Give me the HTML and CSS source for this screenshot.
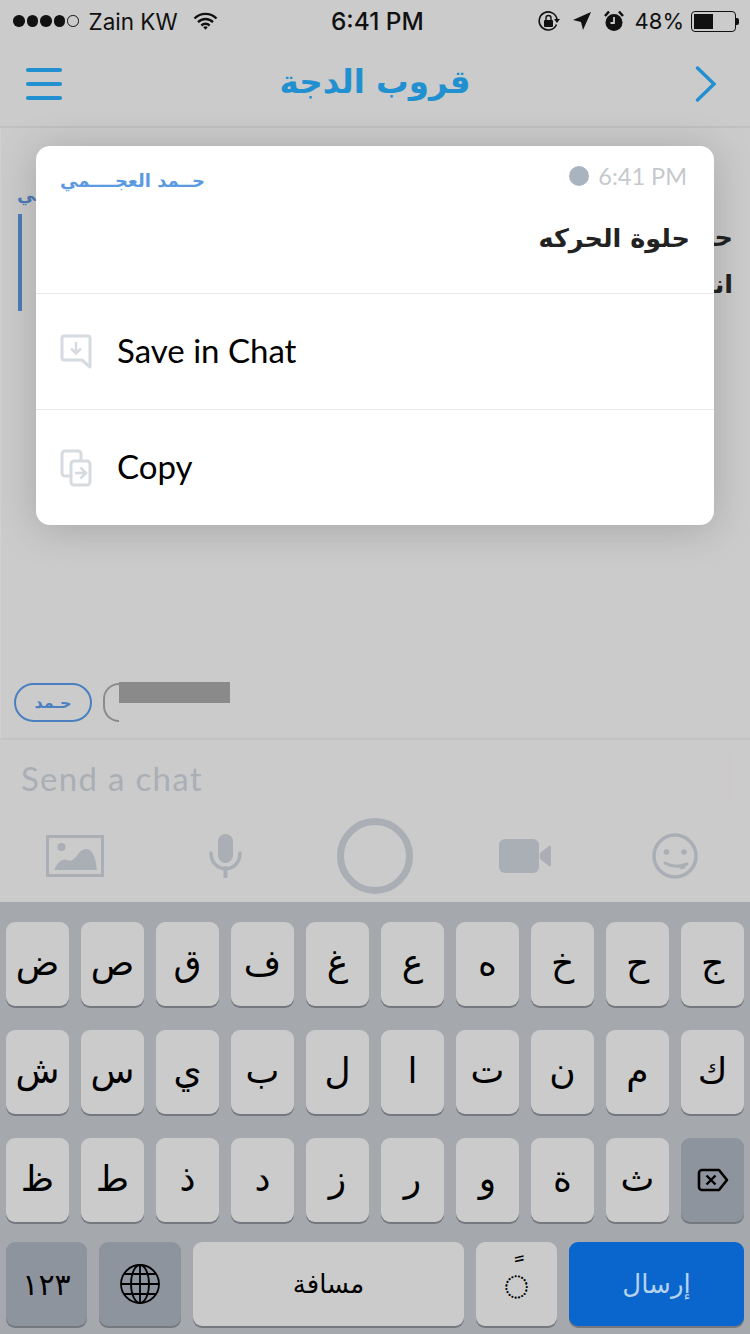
FILE: index.html
```html
<!doctype html>
<html lang="ar">
  <head>
    <meta charset="UTF-8" />
    <meta name="viewport" content="width=device-width, initial-scale=1" />
    <title>Chat</title>
    <link rel="stylesheet" href="styles.css">
  </head>
  <body>
    <div class="c-screen">
      <div class="c-status">
        <div class="c-status__left">
          <div class="c-signal"><i></i><i></i><i></i><i></i><i class="c-signal__off"></i></div>
          <span class="c-status__carrier" dir="ltr">Zain KW</span>
          <svg class="c-status__wifi" viewBox="0 0 25 18" width="25" height="18">
            <path d="M1.5 6.5a15.5 15.5 0 0 1 22 0M5 10.2a10.5 10.5 0 0 1 15 0M8.4 13.6a5.6 5.6 0 0 1 8.2 0" fill="none" stroke="#111" stroke-width="2.4"/>
            <path d="M10.3 15.2a3.2 3.2 0 0 1 4.4 0l-2.2 2.6z" fill="#111"/>
          </svg>
        </div>
        <span class="c-status__time" dir="ltr">6:41 PM</span>
        <div class="c-status__right">
          <svg viewBox="0 0 23 23" width="23" height="23">
            <path d="M19.5 14.5a9 9 0 1 1 .6-5" fill="none" stroke="#111" stroke-width="1.6"/>
            <path d="M17 9h6l-3 4z" fill="#111"/>
            <rect x="7" y="10" width="9" height="7" rx="1" fill="#111"/>
            <path d="M9 10V8a2.5 2.5 0 0 1 5 0v2" fill="none" stroke="#111" stroke-width="1.4"/>
          </svg>
          <svg class="c-status__arrow" viewBox="0 0 18 18" width="18" height="18"><path d="M18 0 0 8l8 2 2 8z" fill="#111"/></svg>
          <svg class="c-status__alarm" viewBox="0 0 20 22" width="20" height="22">
            <circle cx="10" cy="12.5" r="8.5" fill="#111"/>
            <path d="M10 7v6h-3.500" fill="none" stroke="#ccc" stroke-width="1.800"/>
            <path d="M1 6 5 1.500M19 6l-4-4.500" stroke="#111" stroke-width="2.500"/>
          </svg>
          <span class="c-status__battery-text" dir="ltr">48%</span>
          <div class="c-battery"><div class="c-battery__fill"></div></div>
          <div class="c-battery__cap"></div>
        </div>
      </div>

      <div class="c-nav">
        <div class="c-nav__menu"><i></i><i></i><i></i></div>
        <div class="c-nav__title">قروب الدجة</div>
        <svg class="c-nav__back" viewBox="0 0 22 36" width="22" height="36"><path d="M2.500 2 19 18 2.500 34" fill="none" stroke="#2190d0" stroke-width="3.400" stroke-linecap="round"/></svg>
      </div>

      <div class="c-chat">
        <div class="c-message">
          <div class="c-message__name">حـمد العجــمي</div>
          <div class="c-message__body">
            <p>حلوة الحركه</p>
            <p>انا</p>
          </div>
        </div>
        <div class="c-chips">
          <div class="c-chip">حـمد</div>
          <div class="c-chip-cut"></div>
          <div class="c-redact"></div>
        </div>
      </div>

      <div class="c-input">
        <span class="c-input__placeholder" dir="ltr">Send a chat</span>
        <div class="c-input__caret"></div>
      </div>

      <div class="c-tools">
        <svg viewBox="0 0 58 42" width="58" height="42">
          <rect x="1.500" y="1.500" width="55" height="39" fill="none" stroke="#a9afb5" stroke-width="3"/>
          <circle cx="15.500" cy="12" r="4" fill="#a9afb5"/>
          <path d="M8 35c4-8 8-12 13-10 4 2 7 0 12-7 5-6 11-5 14 1 3 5 3 11 4 16z" fill="#a9afb5"/>
        </svg>
        <svg viewBox="0 0 33 44" width="33" height="44">
          <rect x="9" y="0" width="15" height="29" rx="7.500" fill="#a9afb5"/>
          <path d="M2 19c0 21 29 21 29 0" fill="none" stroke="#a9afb5" stroke-width="3.500" stroke-linecap="round"/>
          <path d="M16.500 34v9" stroke="#a9afb5" stroke-width="4" stroke-linecap="round"/>
        </svg>
        <div class="c-shutter"></div>
        <svg viewBox="0 0 52 34" width="52" height="34">
          <rect x="0" y="0" width="40" height="34" rx="6" fill="#a9afb5"/>
          <path d="M41 14 50 7q2-1 2 1v18q0 2-2 1l-9-7z" fill="#a9afb5"/>
        </svg>
        <svg viewBox="0 0 46 46" width="46" height="46">
          <circle cx="23" cy="23" r="21" fill="none" stroke="#a9afb5" stroke-width="3.500"/>
          <circle cx="14.500" cy="19" r="2.800" fill="#a9afb5"/>
          <circle cx="32" cy="19" r="2.800" fill="#a9afb5"/>
          <path d="M13 30c7 4 15 4 22 1" fill="none" stroke="#a9afb5" stroke-width="3" stroke-linecap="round"/>
          <path d="M26 32.500l7-2 .5 4q-3 3-5.500 1z" fill="#a9afb5"/>
        </svg>
      </div>

      <div class="c-keyboard">
        <div class="c-keys">
          <div class="c-key">ض</div><div class="c-key">ص</div><div class="c-key">ق</div><div class="c-key">ف</div><div class="c-key">غ</div>
          <div class="c-key">ع</div><div class="c-key">ه</div><div class="c-key">خ</div><div class="c-key">ح</div><div class="c-key">ج</div>
        </div>
        <div class="c-keys">
          <div class="c-key">ش</div><div class="c-key">س</div><div class="c-key">ي</div><div class="c-key">ب</div><div class="c-key">ل</div>
          <div class="c-key">ا</div><div class="c-key">ت</div><div class="c-key">ن</div><div class="c-key">م</div><div class="c-key">ك</div>
        </div>
        <div class="c-keys">
          <div class="c-key">ظ</div><div class="c-key">ط</div><div class="c-key">ذ</div><div class="c-key">د</div><div class="c-key">ز</div>
          <div class="c-key">ر</div><div class="c-key">و</div><div class="c-key">ة</div><div class="c-key">ث</div>
          <div class="c-key c-key--dark">
            <svg viewBox="0 0 32 24" width="32" height="24">
              <path d="M5 2h17l8 10-8 10H5a3 3 0 0 1-3-3V5a3 3 0 0 1 3-3z" fill="none" stroke="#000" stroke-width="2.600" stroke-linejoin="round"/>
              <path d="M9.500 7.500l9 9M18.500 7.500l-9 9" stroke="#000" stroke-width="2.400"/>
            </svg>
          </div>
        </div>
        <div class="c-keys c-keys--bottom">
          <div class="c-key c-key--dark c-key--digits">١٢٣</div>
          <div class="c-key c-key--dark">
            <svg viewBox="0 0 40 40" width="40" height="40" fill="none" stroke="#000" stroke-width="1.800">
              <circle cx="20" cy="20" r="19"/>
              <ellipse cx="20" cy="20" rx="9" ry="19"/>
              <path d="M20 1v38M1 20h38M4 10h32M4 30h32"/>
            </svg>
          </div>
          <div class="c-key c-key--space">مسافة</div>
          <div class="c-key c-key--mark"><span>&nbsp;ً</span><span class="c-key__circle">◌</span></div>
          <div class="c-key c-key--send">إرسال</div>
        </div>
      </div>

      <div class="c-sheet">
        <div class="c-sheet__head">
          <div class="c-sheet__meta">
            <span class="c-sheet__name">حــمد العجــــمي</span>
            <span class="c-sheet__time" dir="ltr"><i></i>6:41 PM</span>
          </div>
          <div class="c-sheet__text">حلوة الحركه</div>
        </div>
        <div class="c-sheet__row">
          <svg viewBox="0 0 32 36" width="32" height="36" fill="none" stroke="#d6dbe0" stroke-width="3">
            <path d="M4 2h24a2 2 0 0 1 2 2v29l-8-7H4a2 2 0 0 1-2-2V4a2 2 0 0 1 2-2z" stroke-linejoin="round"/>
            <path d="M16 8v11M11 14.500l5 5 5-5" stroke-width="2.500"/>
          </svg>
          <span>Save in Chat</span>
        </div>
        <div class="c-sheet__row">
          <svg viewBox="0 0 32 38" width="32" height="38" fill="none" stroke="#d6dbe0" stroke-width="3">
            <path d="M11 27H5a3 3 0 0 1-3-3V5a3 3 0 0 1 3-3h13a3 3 0 0 1 3 3v6"/>
            <rect x="11" y="12" width="19" height="24" rx="3"/>
            <path d="M15 24h10M20.500 18.500l5.500 5.500-5.500 5.500" stroke-width="2.500"/>
          </svg>
          <span>Copy</span>
        </div>
      </div>
    </div>
  </body>
</html>
```

FILE: styles.css
```css
html,
body {
  margin: 0;
  padding: 0;
}

body {
  width: 750px;
  height: 1334px;
  overflow: hidden;
  font-family: 'DejaVu Sans', sans-serif;
  background-color: #cbcbcb;
}

p {
  margin: 0;
}

.c-screen {
  position: relative;
  display: flex;
  flex-direction: column;
  height: 1334px;
  overflow: hidden;
}

/* status bar */

.c-status {
  position: relative;
  display: flex;
  justify-content: space-between;
  align-items: center;
  height: 42px;
  padding: 0 11px 0 13px;
  font-family: 'Inter', sans-serif;
  color: #111;
}

.c-status__left,
.c-status__right {
  display: flex;
  align-items: center;
}

.c-signal {
  display: flex;
  gap: 2px;
}

.c-signal i {
  width: 11.500px;
  height: 11.500px;
  border-radius: 50%;
  background-color: #111;
}

.c-signal .c-signal__off {
  box-sizing: border-box;
  background: none;
  border: 1px solid #111;
}

.c-status__carrier {
  margin-left: 10px;
  font-size: 22.500px;
}

.c-status__wifi {
  margin-left: 15px;
}

.c-status__time {
  position: absolute;
  left: 331px;
  font-size: 24.400px;
  font-weight: 500;
}

.c-status__right svg {
  margin-right: 13px;
}

.c-status__right .c-status__alarm {
  margin-right: 11px;
}

.c-status__battery-text {
  margin-right: 7px;
  font-size: 22px;
}

.c-battery {
  box-sizing: border-box;
  width: 45px;
  height: 21px;
  padding: 2px;
  border: 1px solid #111;
  border-radius: 4px;
}

.c-battery__fill {
  width: 48%;
  height: 100%;
  background-color: #111;
}

.c-battery__cap {
  width: 3px;
  height: 7px;
  border-radius: 0 2px 2px 0;
  background-color: #111;
}

/* nav */

.c-nav {
  display: grid;
  grid-template-columns: 1fr auto 1fr;
  align-items: center;
  height: 84px;
  padding: 0 33px;
  border-bottom: 2px solid #c0c0c0;
}

.c-nav__menu {
  display: grid;
  gap: 10px;
  width: 36px;
  margin-left: -7px;
}

.c-nav__menu i {
  height: 4px;
  border-radius: 2px;
  background-color: #2190d0;
}

.c-nav__title {
  padding-bottom: 4px;
  font-size: 32.500px;
  font-weight: 700;
  color: #2190d0;
}

.c-nav__back {
  justify-self: end;
}

/* chat */

.c-chat {
  flex: 1;
  display: flex;
  flex-direction: column;
  justify-content: space-between;
  padding: 56px 17px 16px 13px;
  border-left: 1px solid #d0d0d0;
  border-bottom: 2px solid #c3c3c3;
}

.c-message__name {
  direction: rtl;
  text-align: left;
  margin-left: 3px;
  margin-bottom: 9px;
  font-size: 18px;
  font-weight: 700;
  color: #4c7cb8;
}

.c-message__body {
  margin-left: 4px;
  height: 97px;
  border-left: 4px solid #4c7cb8;
  direction: rtl;
  font-size: 25.500px;
  font-weight: 700;
  line-height: 47px;
  color: #222;
}

.c-chips {
  display: flex;
  align-items: flex-start;
}

.c-chip {
  box-sizing: border-box;
  display: flex;
  justify-content: center;
  align-items: center;
  width: 78px;
  height: 39px;
  border: 2px solid #4a7fc0;
  border-radius: 20px;
  font-size: 16px;
  font-weight: 700;
  color: #4a7fc0;
}

.c-chip-cut {
  box-sizing: border-box;
  width: 16px;
  height: 39px;
  margin-left: 11px;
  border: 2px solid #8b8b8b;
  border-right: 0;
  border-radius: 20px 0 0 20px;
}

.c-redact {
  width: 111px;
  height: 21px;
  margin-top: -1px;
  background-color: #8a8a8a;
}

/* input */

.c-input {
  display: flex;
  justify-content: space-between;
  align-items: center;
  height: 76px;
  padding: 0 19px 0 21px;
}

.c-input__placeholder {
  font-family: 'Lato', sans-serif;
  font-size: 33px;
  letter-spacing: 1.300px;
  color: #a9afb5;
}

.c-input__caret {
  width: 2px;
  height: 48px;
  background-color: #cfc6c8;
}

.c-tools {
  box-sizing: border-box;
  display: grid;
  grid-template-columns: repeat(5, 150px);
  justify-items: center;
  align-items: center;
  height: 81px;
  margin-bottom: 5px;
  padding-bottom: 1px;
  border-bottom: 1px solid #d0d0d0;
}

.c-shutter {
  box-sizing: border-box;
  width: 76px;
  height: 76px;
  border: 7px solid #a9afb5;
  border-radius: 50%;
}

/* keyboard */

.c-keyboard {
  box-sizing: border-box;
  display: grid;
  align-content: start;
  gap: 24px;
  height: 432px;
  padding: 20px 6px 0;
  background-color: #a5a9ae;
}

.c-keys {
  display: grid;
  grid-template-columns: repeat(10, 63px);
  column-gap: 12px;
  height: 84px;
}

.c-keys--bottom {
  grid-template-columns: 81px 82px 271px 81px 175px;
  margin-top: -4px;
}

.c-key {
  box-sizing: border-box;
  display: flex;
  justify-content: center;
  align-items: center;
  padding-bottom: 4px;
  border-radius: 9px;
  background-color: #cbcbcb;
  box-shadow: 0 2px 0 #75797f;
  font-size: 36px;
  color: #000;
}

.c-key--dark {
  padding-bottom: 0;
  background-color: #8e949d;
}

.c-key--digits {
  font-size: 30px;
}

.c-key--space {
  font-size: 26px;
  padding-bottom: 0;
}

.c-key--mark {
  flex-direction: column;
  padding-bottom: 12px;
  font-size: 30px;
  line-height: 16px;
}

.c-key__circle {
  font-family: 'Noto Sans CJK SC', sans-serif;
  font-size: 24px;
  font-weight: 700;
}

.c-key--send {
  padding-bottom: 0;
  background-color: #0a66cc;
  font-size: 26px;
  color: #b5d3f0;
}

/* sheet */

.c-sheet {
  position: absolute;
  top: 146px;
  left: 36px;
  width: 678px;
  height: 379px;
  border-radius: 14px;
  background-color: #fff;
  box-shadow: 0 4px 40px rgba(0, 0, 0, 0.18);
}

.c-sheet__head {
  box-sizing: border-box;
  height: 147px;
  padding: 18px 24px 0;
}

.c-sheet__meta {
  display: flex;
  justify-content: space-between;
  align-items: center;
  height: 32px;
}

.c-sheet__name {
  font-size: 18px;
  font-weight: 700;
  color: #5b9ae0;
}

.c-sheet__time {
  display: flex;
  align-items: center;
  gap: 9px;
  padding-right: 3px;
  padding-bottom: 8px;
  font-family: 'Lato', sans-serif;
  font-size: 23.500px;
  color: #c5c9cc;
}

.c-sheet__time i {
  width: 20px;
  height: 20px;
  border-radius: 50%;
  background-color: #aab4bf;
}

.c-sheet__text {
  direction: rtl;
  margin-top: 27px;
  font-size: 25.500px;
  font-weight: 700;
  color: #222;
}

.c-sheet__row {
  box-sizing: border-box;
  display: flex;
  align-items: center;
  gap: 25px;
  height: 116px;
  padding-left: 24px;
  border-top: 1px solid #e8e8e8;
  font-family: 'Lato', sans-serif;
  font-size: 33px;
  color: #000;
}

.c-sheet__row span {
  padding-bottom: 4px;
}
```
